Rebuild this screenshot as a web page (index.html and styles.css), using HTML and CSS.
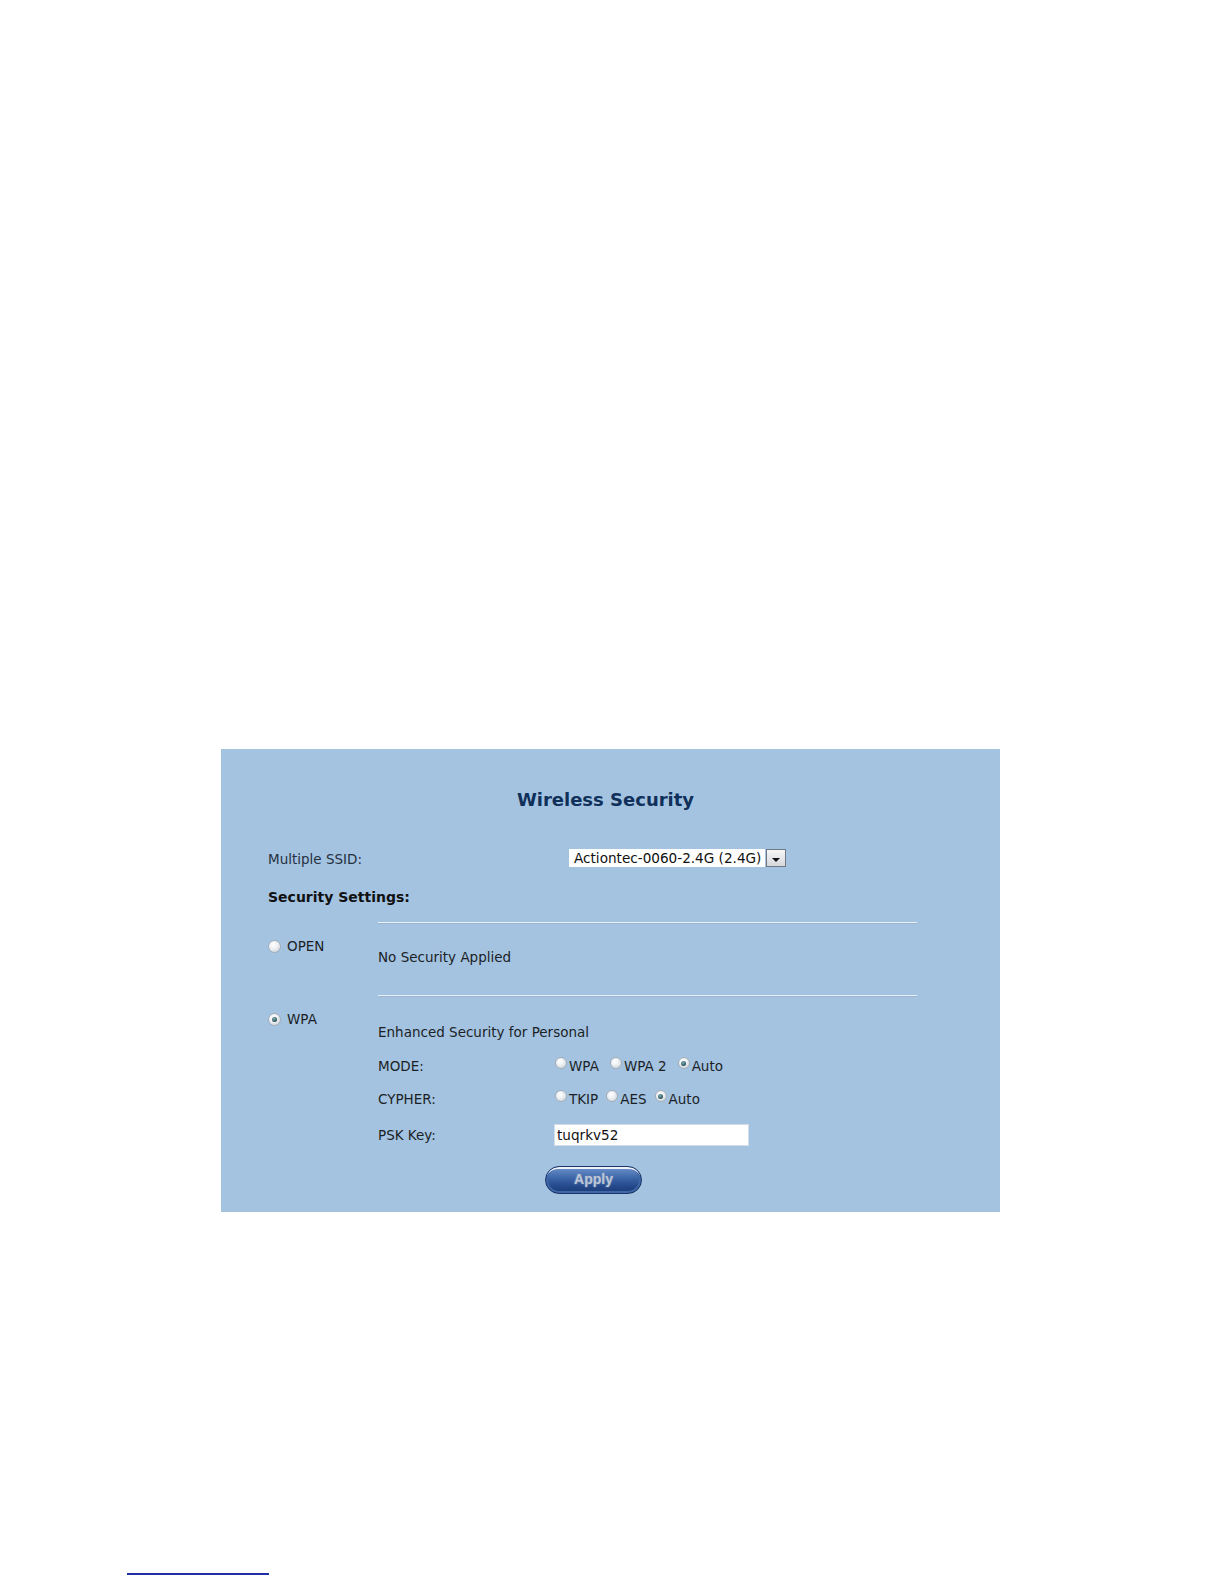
FILE: index.html
```html
<!DOCTYPE html>
<html>
<head>
<meta charset="utf-8">
<link rel="stylesheet" href="styles.css">
</head>
<body>
<div class="page">
  <div class="panel">
    <h1 class="title">Wireless Security</h1>
    <div class="ssid-row">
      <div class="ssid-label">Multiple SSID:</div>
      <div class="select">
        <span class="select-value">Actiontec-0060-2.4G (2.4G)</span>
        <span class="select-btn"><span class="arrow"></span></span>
      </div>
    </div>
    <div class="sec-title">Security Settings:</div>
    <div class="sec sec1">
      <div class="sec-left"><span class="radio"></span><span class="opt-label">OPEN</span></div>
      <div class="sec-right">
        <div class="rule"></div>
        <div class="desc">No Security Applied</div>
      </div>
    </div>
    <div class="sec sec2">
      <div class="sec-left"><span class="radio checked"></span><span class="opt-label">WPA</span></div>
      <div class="sec-right">
        <div class="rule"></div>
        <div class="desc">Enhanced Security for Personal</div>
        <div class="field">
          <div class="field-label">MODE:</div>
          <div class="choices wide">
            <span class="radio sm"></span><span class="ch">WPA</span>
            <span class="radio sm"></span><span class="ch">WPA 2</span>
            <span class="radio sm checked"></span><span class="ch">Auto</span>
          </div>
        </div>
        <div class="field">
          <div class="field-label">CYPHER:</div>
          <div class="choices narrow">
            <span class="radio sm"></span><span class="ch">TKIP</span>
            <span class="radio sm"></span><span class="ch">AES</span>
            <span class="radio sm checked"></span><span class="ch">Auto</span>
          </div>
        </div>
        <div class="field psk">
          <div class="field-label">PSK Key:</div>
          <div class="input">tuqrkv52</div>
        </div>
        <div class="btn-row"><span class="apply">Apply</span></div>
      </div>
    </div>
  </div>
  <div class="footnote-rule"></div>
</div>
</body>
</html>
```
FILE: styles.css
```css
html, body {
  margin: 0;
  padding: 0;
  background: #ffffff;
}
.page {
  width: 1224px;
  height: 1584px;
  position: relative;
  padding-top: 749px;
  box-sizing: border-box;
  font-family: "DejaVu Sans", Verdana, sans-serif;
  font-size: 13.5px;
  line-height: 16px;
  color: #1c1f26;
}
.panel {
  margin-left: 221px;
  width: 779px;
  height: 463px;
  background: #a3c3e1;
  box-sizing: border-box;
  padding: 40px 0 0 47px;
}
.title {
  margin: 0 0 0 -47px;
  padding-right: 10px;
  text-align: center;
  font-size: 18px;
  line-height: 22px;
  font-weight: bold;
  color: #10305a;
}
.ssid-row {
  display: flex;
  align-items: flex-start;
  margin-top: 38px;
  height: 18px;
}
.ssid-label {
  width: 301px;
  padding-top: 2px;
  color: #26313f;
}
.select {
  display: flex;
  height: 18px;
}
.select-value {
  background: #fff;
  width: 196px;
  box-sizing: border-box;
  padding-left: 5px;
  line-height: 18px;
  font-size: 13.6px;
  color: #111;
}
.select-btn {
  width: 20px;
  margin-left: 1px;
  background: linear-gradient(#f6f6f6, #d6d8dc);
  border: 1px solid #6f7884;
  box-sizing: border-box;
  display: flex;
  align-items: center;
  justify-content: center;
}
.arrow {
  width: 0;
  height: 0;
  border-left: 4px solid transparent;
  border-right: 4px solid transparent;
  border-top: 4px solid #111;
  margin-top: 4px;
}
.sec-title {
  margin-top: 21px;
  font-size: 14px;
  font-weight: bold;
  line-height: 18px;
  color: #111;
}
.sec {
  display: grid;
  grid-template-columns: 110px 539px;
}
.sec1 {
  margin-top: 16px;
}
.sec2 {
  margin-top: 30px;
}
.sec-left {
  padding-top: 16px;
  display: flex;
  align-items: center;
  height: 16px;
}
.opt-label {
  margin-left: 6px;
}
.rule {
  height: 1px;
  background: #e9f0f7;
  border-bottom: 1px solid #9ab6d2;
}
.sec1 .desc {
  margin-top: 25px;
}
.sec2 .desc {
  margin-top: 27px;
}
.radio {
  display: inline-block;
  width: 13px;
  height: 13px;
  border-radius: 50%;
  box-sizing: border-box;
  border: 1px solid #a3adb8;
  background: radial-gradient(circle at 40% 35%, #ffffff 0%, #eef1f4 40%, #c3cbd3 100%);
  position: relative;
  flex: none;
}
.radio.sm {
  width: 12px;
  height: 12px;
  margin-top: -1px;
}
.radio.checked::after {
  content: "";
  position: absolute;
  left: 50%;
  top: 50%;
  width: 5px;
  height: 5px;
  margin: -2.5px 0 0 -2.5px;
  border-radius: 50%;
  background: radial-gradient(circle at 40% 35%, #7fb0b4, #1e4249 80%);
}
.field {
  display: flex;
  align-items: flex-start;
  margin-top: 18px;
  height: 16px;
}
.field + .field {
  margin-top: 17px;
}
.field-label {
  width: 177px;
  flex: none;
}
.choices {
  display: flex;
  align-items: flex-start;
}
.ch {
  margin-left: 2px;
}
.choices.wide .ch {
  margin-right: 11px;
}
.choices.narrow .ch {
  margin-right: 8px;
}
.field.psk {
  height: 22px;
  align-items: center;
}
.input {
  margin-left: -1px;
  width: 195px;
  height: 22px;
  box-sizing: border-box;
  background: #fff;
  border: 1px solid #d2dde8;
  line-height: 20px;
  padding-left: 2px;
  font-size: 13.6px;
  color: #111;
}
.btn-row {
  margin-top: 20px;
  padding-left: 167px;
  height: 28px;
}
.apply {
  display: inline-block;
  width: 97px;
  height: 28px;
  box-sizing: border-box;
  border-radius: 14px;
  background: linear-gradient(#6d93cc 0%, #3a63a6 45%, #24488a 75%, #1c3c76 100%);
  border: 1px solid #1a3466;
  box-shadow: inset 0 4px 0 -2px #eef2f8, inset 0 0 0 2px #3f68a8;
  text-align: center;
  line-height: 24px;
  font-family: "Liberation Sans", Arial, sans-serif;
  font-weight: bold;
  font-size: 14px;
  color: #bcc7d8;
  text-shadow: 0 0 2px #8296b8;
}
.footnote-rule {
  position: absolute;
  left: 127px;
  top: 1573px;
  width: 142px;
  height: 2px;
  background: #1f2fa8;
}
```
